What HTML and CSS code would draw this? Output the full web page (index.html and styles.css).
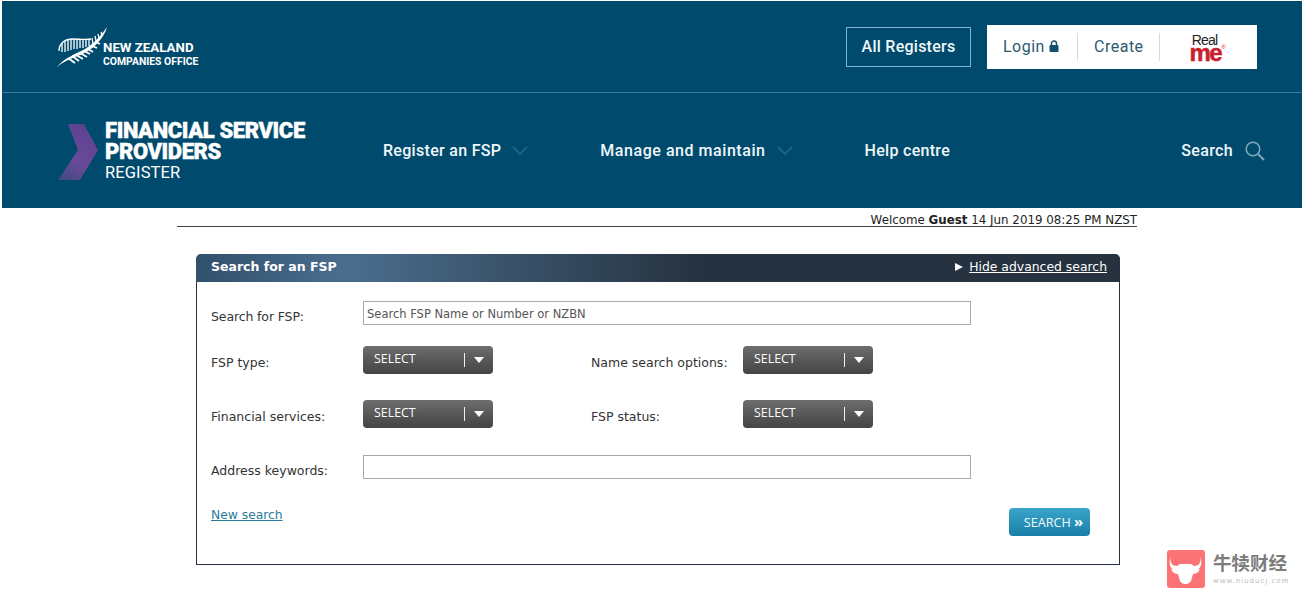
FILE: index.html
```html
<!DOCTYPE html>
<html>
<head>
    <title>Financial Service Providers Register</title>
    <link rel="stylesheet" href="styles.css">
</head>
<body>
    <header class="site-header">
        <div class="top-bar">
            <div class="co-logo">
                <svg class="fern" width="52" height="44" viewBox="0 0 52 44">
                    <path d="M0 41C6 33 18 28 28 23 36 18 44 10 50 1 47 11 40 19 31 25 21 31 9 33 0 41Z" fill="#fff"/>
                    <path d="M2 25C2 17 8 13 16 13 22 13 28 14 34 13" stroke="#fff" stroke-width="1.4" fill="none"/>
                    <path d="M5 17v9M8 15v11M11 14v11M14 13v11M17 13v10M20 13v10M23 14v8M26 14v8M29 14v7M32 13v7M35 12l1 6M38 10l1 5M41 8l1 4M44 6l1 3" stroke="#fff" stroke-width="1.3" fill="none"/>
                    <path d="M11 32l7 5M15 30l7 5M19 29l7 4M23 27l7 4M27 25l6 3M31 23l5 3M35 20l5 2M39 16l4 2" stroke="#fff" stroke-width="1.8" fill="none"/>
                </svg>
                <div class="co-name">
                    <span class="co-line1">NEW ZEALAND</span>
                    <span class="co-line2">COMPANIES OFFICE</span>
                </div>
            </div>
            <a class="all-registers" href="#">All Registers</a>
            <div class="login-box">
                <a class="login-link" href="#">Login
                    <svg width="10" height="12" viewBox="0 0 10 12"><path d="M2.5 5V3.5a2.5 2.5 0 0 1 5 0V5" fill="none" stroke="#0f4f6d" stroke-width="1.4"/><rect x="0.5" y="5" width="9" height="7" rx="1" fill="#0f4f6d"/></svg>
                </a>
                <a class="create-link" href="#">Create</a>
                <div class="realme"><span class="real">Real</span><span class="me">me<sup>®</sup></span></div>
            </div>
        </div>
        <nav class="main-nav">
            <div class="fsp-logo">
                <svg width="42" height="58" viewBox="0 0 42 58">
                    <defs><linearGradient id="chev" x1="0" y1="1" x2="0.5" y2="0"><stop offset="0" stop-color="#3a4a80"/><stop offset="0.45" stop-color="#6a4a98"/><stop offset="1" stop-color="#5c4390"/></linearGradient></defs>
                    <path d="M11 1H27L41 27 23 57H1L21 27Z" fill="url(#chev)"/>
                </svg>
                <div class="fsp-name">
                    <strong>FINANCIAL SERVICE<br>PROVIDERS</strong>
                    <span>REGISTER</span>
                </div>
            </div>
            <a class="nav-item" href="#">Register an FSP <svg class="caret" width="16" height="9" viewBox="0 0 16 9"><path d="M1 1l7 7 7-7" fill="none" stroke="#246f92" stroke-width="1.3"/></svg></a>
            <a class="nav-item nav-manage" href="#">Manage and maintain <svg class="caret" width="16" height="9" viewBox="0 0 16 9"><path d="M1 1l7 7 7-7" fill="none" stroke="#246f92" stroke-width="1.3"/></svg></a>
            <a class="nav-item" href="#">Help centre</a>
            <a class="nav-item nav-search" href="#">Search
                <svg width="20" height="20" viewBox="0 0 20 20"><circle cx="8" cy="8" r="6.8" fill="none" stroke="#7fa9bd" stroke-width="1.5"/><path d="M13 13l6 6" stroke="#7fa9bd" stroke-width="2"/></svg>
            </a>
        </nav>
    </header>

    <div class="welcome">Welcome <b>Guest</b> 14 Jun 2019 08:25 PM NZST</div>

    <section class="panel">
        <div class="panel-head">
            <h2>Search for an FSP</h2>
            <a href="#"><i class="arrow"></i><span>Hide advanced search</span></a>
        </div>
        <div class="panel-body">
            <div class="row row-first">
                <label>Search for FSP:</label>
                <input class="text-input" type="text" placeholder="Search FSP Name or Number or NZBN">
            </div>
            <div class="row row-select">
                <label>FSP type:</label>
                <div class="select-btn">SELECT<span class="sep"></span><i></i></div>
                <label class="label-2">Name search options:</label>
                <div class="select-btn">SELECT<span class="sep"></span><i></i></div>
            </div>
            <div class="row row-select">
                <label>Financial services:</label>
                <div class="select-btn">SELECT<span class="sep"></span><i></i></div>
                <label class="label-2">FSP status:</label>
                <div class="select-btn">SELECT<span class="sep"></span><i></i></div>
            </div>
            <div class="row row-address">
                <label>Address keywords:</label>
                <input class="text-input" type="text">
            </div>
            <div class="panel-foot">
                <a class="new-search" href="#">New search</a>
                <button class="search-btn">SEARCH <b>»</b></button>
            </div>
        </div>
    </section>

    <div class="watermark">
        <svg width="38" height="38" viewBox="0 0 38 38">
            <rect width="38" height="38" rx="3" fill="#fb7374"/>
            <path d="M4 6C2 12 5 16 10 16L13 14H24L27 16C32 16 35 12 33 6 36 13 34 19 29 20L33 19C32 22 29 24 26 24L24 31C23 33 21 34 18.5 34 16 34 14 33 13 31L11 24C8 24 5 22 4 19L8 20C3 19 1 13 4 6Z" fill="#fff"/>
        </svg>
        <div class="wm-text">
            <span class="wm-cn">牛犊财经</span>
            <span class="wm-url">www.niuducj.com</span>
        </div>
    </div>
</body>
</html>
```

FILE: styles.css
```css
* {
    box-sizing: border-box;
}

body {
    margin: 0;
    height: 596px;
    overflow: hidden;
    position: relative;
    background-color: #fff;
    color: #222;
    font-family: "DejaVu Sans", sans-serif;
    font-size: 12px;
}

a {
    text-decoration: none;
    color: inherit;
}

.site-header {
    margin: 1px 0 0 2px;
    height: 207px;
    background-color: #004b6d;
    color: #f0f7fa;
    font-family: Roboto, sans-serif;
}

.top-bar {
    height: 92px;
    border-bottom: 1px solid #3d7c99;
    display: flex;
    align-items: flex-start;
    padding: 24px 45px 0 55px;
}

.co-logo {
    display: flex;
    align-items: flex-start;
    margin-right: auto;
}

.fern {
    margin-top: 1px;
}

.co-name {
    display: flex;
    flex-direction: column;
    margin: 16px 0 0 -6px;
    font-weight: 700;
    color: #fff;
}

.co-line1 {
    font-size: 13.3px;
    line-height: 14px;
}

.co-line2 {
    font-size: 10.4px;
    line-height: 13px;
}

.all-registers {
    width: 125px;
    height: 40px;
    margin: 2px 16px 0 0;
    border: 1px solid #7fb6d2;
    text-align: center;
    line-height: 37px;
    font-size: 16px;
    font-weight: 500;
    letter-spacing: 0.25px;
}

.login-box {
    width: 270px;
    height: 44px;
    background-color: #fff;
    color: #2b5a70;
    display: flex;
    align-items: center;
    font-size: 16px;
    letter-spacing: 0.5px;
}

.login-link {
    width: 91px;
    height: 28px;
    padding-left: 16px;
    line-height: 28px;
    border-right: 1px solid #d9d9d9;
}

.create-link {
    width: 82px;
    height: 28px;
    padding-left: 16px;
    line-height: 28px;
    border-right: 1px solid #d9d9d9;
}

.realme {
    flex: 1;
    display: flex;
    flex-direction: column;
    align-items: center;
    padding: 0 8px 2px 0;
    font-family: "Liberation Sans", sans-serif;
}

.real {
    font-size: 14px;
    line-height: 12px;
    letter-spacing: -0.8px;
    color: #222;
}

.me {
    margin-left: 6px;
    font-size: 24px;
    font-weight: 700;
    line-height: 13px;
    letter-spacing: -1.5px;
    color: #c8202f;
    -webkit-text-stroke: 0.5px #c8202f;
}

.me sup {
    font-size: 6px;
    font-weight: 400;
    line-height: 0;
    letter-spacing: 0;
    vertical-align: 12px;
    -webkit-text-stroke: 0;
}

.main-nav {
    height: 115px;
    display: flex;
    align-items: center;
    padding: 0 37px 0 55px;
}

.nav-item {
    font-size: 16px;
    font-weight: 500;
    display: flex;
    align-items: center;
    gap: 11px;
    margin-right: 72px;
    letter-spacing: 0.3px;
}

.nav-manage {
    letter-spacing: 0.55px;
}

.nav-search {
    margin: 0 0 0 auto;
    gap: 12px;
    letter-spacing: 0.35px;
}

.fsp-logo {
    width: 326px;
    padding-top: 2px;
    display: flex;
    align-items: center;
}

.fsp-name {
    display: flex;
    flex-direction: column;
    margin-left: 6px;
    color: #fff;
}

.fsp-name strong {
    font-size: 22px;
    font-weight: 900;
    line-height: 21px;
    letter-spacing: -0.4px;
    -webkit-text-stroke: 0.4px #fff;
}

.fsp-name span {
    font-size: 16.5px;
    line-height: 21px;
    letter-spacing: 0.1px;
}

.welcome {
    width: 960px;
    height: 19px;
    margin: 0 0 0 177px;
    border-bottom: 1px solid #444;
    text-align: right;
    line-height: 24px;
    font-size: 11.85px;
    white-space: nowrap;
}

.panel {
    width: 924px;
    height: 311px;
    margin: 27px 0 0 196px;
    border: 1px solid #26323f;
    border-top: 0;
    border-radius: 6px 6px 0 0;
}

.panel-head {
    height: 28px;
    margin: 0 -1px;
    padding: 0 13px 3px 15px;
    display: flex;
    align-items: center;
    justify-content: space-between;
    color: #fff;
    border-radius: 5px 5px 0 0;
    background: linear-gradient(90deg, #31506b 0%, #4a6e8f 16%, #26323f 55%, #26323f 100%);
}

.panel-head h2 {
    margin: 0;
    font-size: 12.5px;
    font-weight: 700;
}

.panel-head a {
    display: flex;
    align-items: center;
    font-size: 12.4px;
}

.panel-head span {
    text-decoration: underline;
}

.arrow {
    width: 0;
    height: 0;
    margin-right: 6px;
    border-left: 8px solid #fff;
    border-top: 4px solid transparent;
    border-bottom: 4px solid transparent;
}

.panel-body {
    padding: 19px 14px 0;
}

.row {
    display: flex;
    align-items: center;
}

.row label {
    width: 152px;
    padding-top: 5px;
    font-size: 12.5px;
    color: #333;
}

.row-first label,
.row-address label {
    padding-top: 7px;
}

.row-first label {
    letter-spacing: -0.12px;
}

.row .label-2 {
    width: 152px;
    margin-left: 98px;
}

.row-select {
    margin-top: 21px;
    height: 28px;
}

.row-select + .row-select {
    margin-top: 26px;
}

.row-address {
    margin-top: 27px;
}

.text-input {
    width: 608px;
    height: 24px;
    padding: 2px 3px 0;
    border: 1px solid #a8a8a8;
    font-family: "DejaVu Sans", sans-serif;
    font-size: 11.5px;
    color: #444;
}

.text-input::placeholder {
    color: #555;
    opacity: 1;
}

.select-btn {
    width: 130px;
    height: 28px;
    padding: 0 8px 4px 11px;
    display: flex;
    align-items: center;
    border-radius: 4px;
    background: linear-gradient(180deg, #6d6d6d 0%, #444 100%);
    color: #fff;
    font-family: "Open Sans", sans-serif;
    font-size: 12.4px;
}

.select-btn .sep {
    width: 1px;
    height: 14px;
    margin: 4px 0 0 auto;
    background-color: #eee;
}

.select-btn i {
    width: 0;
    height: 0;
    margin: 4px 1px 0 9px;
    border-top: 6px solid #fff;
    border-left: 5px solid transparent;
    border-right: 5px solid transparent;
}

.panel-foot {
    display: flex;
    justify-content: space-between;
    align-items: flex-start;
    padding: 29px 15px 0 0;
}

.new-search {
    color: #2b7b9a;
    text-decoration: underline;
    font-size: 12.3px;
}

.search-btn {
    width: 81px;
    height: 28px;
    padding: 0 0 0 8px;
    border: 0;
    border-radius: 4px;
    background: linear-gradient(180deg, #3aa5c9 0%, #1a7ea8 100%);
    color: #f2fafd;
    font-family: "Open Sans", sans-serif;
    font-size: 12.6px;
}

.search-btn b {
    font-size: 15px;
    line-height: 12px;
}

.watermark {
    position: absolute;
    left: 1167px;
    top: 550px;
    display: flex;
    gap: 8px;
}

.wm-text {
    display: flex;
    flex-direction: column;
}

.wm-cn {
    font-family: "Noto Sans CJK SC", sans-serif;
    font-size: 18.5px;
    font-weight: 700;
    line-height: 24px;
    color: #7d7d7d;
}

.wm-url {
    margin-top: 3px;
    font-size: 7px;
    letter-spacing: 1px;
    color: #bbb;
}
```
